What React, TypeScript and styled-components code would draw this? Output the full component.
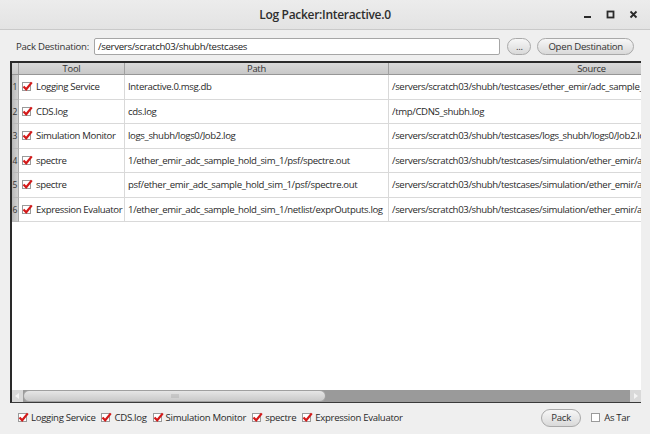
import React from "react";
import styled, { createGlobalStyle } from "styled-components";

const Global = createGlobalStyle`
  html, body { margin: 0; padding: 0; background: #efefef; }
  body { font-family: "Open Sans", "Noto Sans", sans-serif; color: #222; }
  * { box-sizing: border-box; }
`;

const Window = styled.div`
  width: 650px;
  height: 434px;
  display: flex;
  flex-direction: column;
  background: #efefef;
  overflow: hidden;
`;

const TitleBar = styled.div`
  height: 30px;
  flex: none;
  display: grid;
  grid-template-columns: 1fr auto 1fr;
  align-items: center;
  background: linear-gradient(#ececec, #e3e3e3);
  border-bottom: 1px solid #c9c9c9;
`;

const Title = styled.div`
  grid-column: 2;
  font-size: 12px;
  font-weight: 600;
  color: #2e2e2e;
  letter-spacing: -0.3px;
`;

const Controls = styled.div`
  grid-column: 3;
  justify-self: end;
  display: flex;
  gap: 14px;
  padding-right: 12px;
  align-items: center;
`;

const DestRow = styled.div`
  flex: none;
  display: flex;
  align-items: center;
  height: 31px;
  padding: 1px 16px 0 16px;
`;

const Label = styled.span`
  font-size: 9.6px;
  letter-spacing: -0.25px;
  color: #333;
  white-space: nowrap;
`;

const PathInput = styled.div`
  margin-left: 5px;
  width: 408px;
  height: 17px;
  background: #fff;
  border: 1px solid #a6a6a6;
  border-radius: 2px;
  font-size: 9.6px;
  letter-spacing: -0.3px;
  padding: 0 3px;
  line-height: 15px;
  color: #222;
`;

const PillButton = styled.div<{ $w: number; $ml: number }>`
  margin-left: ${(p) => p.$ml}px;
  width: ${(p) => p.$w}px;
  height: 17px;
  border: 1px solid #a9a9a9;
  border-radius: 9px;
  background: linear-gradient(#f7f7f7, #d9d9d9);
  font-size: 9.6px;
  letter-spacing: -0.25px;
  display: flex;
  align-items: center;
  justify-content: center;
  color: #333;
  white-space: nowrap;
`;

const Frame = styled.div`
  flex: none;
  height: 342px;
  margin: 0 9px 0 10px;
  border-left: 2px solid #2a2a2a;
  border-top: 2px solid #2a2a2a;
  border-bottom: 1px solid #3a3a3a;
  display: flex;
  flex-direction: column;
  background: #fff;
  overflow: hidden;
`;

const Grid = styled.div`
  flex: 1;
  display: grid;
  grid-template-columns: 7px 106px 264px 406px;
  grid-auto-rows: 24.5px;
  grid-template-rows: 12px;
  align-content: start;
  overflow: hidden;
`;

const HeadCell = styled.div`
  background: linear-gradient(#d9d9d9, #c8c8c8);
  border-right: 1px solid #a0a0a0;
  border-bottom: 1px solid #969696;
  font-size: 9.4px;
  letter-spacing: -0.25px;
  color: #333;
  display: flex;
  align-items: center;
  justify-content: center;
  line-height: 1;
`;

const NumCell = styled.div`
  background: linear-gradient(90deg, #b9b9b9, #d2d2d2);
  border-bottom: 1px solid #b8b8b8;
  border-right: 1px solid #aaa;
  font-size: 8.5px;
  color: #333;
  display: flex;
  align-items: center;
  padding-left: 0.5px;
`;

const Cell = styled.div`
  border-right: 1px solid #d9d9d9;
  border-bottom: 1px solid #d9d9d9;
  font-size: 9.6px;
  letter-spacing: -0.36px;
  color: #2a2a2a;
  display: flex;
  align-items: center;
  padding-left: 3px;
  white-space: nowrap;
  overflow: hidden;
  gap: 5px;
`;

const HScroll = styled.div`
  flex: none;
  height: 12px;
  display: flex;
  align-items: stretch;
  background: #9a9a9a;
`;

const Arrow = styled.div`
  width: 11px;
  background: #d9d9d9;
  display: flex;
  align-items: center;
  justify-content: center;
`;

const Thumb = styled.div`
  width: 303px;
  background: linear-gradient(#e6e6e6, #c9c9c9);
  border: 1px solid #a0a0a0;
  border-radius: 6px;
  display: flex;
  align-items: center;
  justify-content: center;
`;

const Trough = styled.div`
  flex: 1;
`;

const BottomBar = styled.div`
  flex: 1;
  display: flex;
  align-items: center;
  padding: 0 14px 2px 18px;
`;

const Check = styled.label`
  display: flex;
  align-items: center;
  gap: 4px;
  margin-right: 6px;
  font-size: 9.6px;
  letter-spacing: -0.3px;
  color: #2a2a2a;
  white-space: nowrap;
`;

const Box = styled.span`
  width: 9px;
  height: 9px;
  flex: none;
  background: #fff;
  border: 1px solid #9a9a9a;
  position: relative;
  display: inline-block;
`;

const Spacer = styled.div`
  flex: 1;
`;

const PackButton = styled(PillButton)`
  height: 18px;
  margin-right: 10px;
`;

const CheckMark = () => (
  <svg
    width="11"
    height="10"
    viewBox="0 0 11 10"
    style={{ position: "absolute", left: -1, top: -2 }}
  >
    <path d="M1.5 5.5 L4.2 8.3 L9.8 1.4" stroke="#d41a1a" strokeWidth="2.2" fill="none" />
  </svg>
);

const CheckBox = ({ checked }: { checked: boolean }) => (
  <Box>{checked && <CheckMark />}</Box>
);

const rows = [
  ["Logging Service", "Interactive.0.msg.db", "/servers/scratch03/shubh/testcases/ether_emir/adc_sample_hold_sim_1/Interactive.0.msg.db"],
  ["CDS.log", "cds.log", "/tmp/CDNS_shubh.log"],
  ["Simulation Monitor", "logs_shubh/logs0/Job2.log", "/servers/scratch03/shubh/testcases/logs_shubh/logs0/Job2.log"],
  ["spectre", "1/ether_emir_adc_sample_hold_sim_1/psf/spectre.out", "/servers/scratch03/shubh/testcases/simulation/ether_emir/adc_sample_hold"],
  ["spectre", "psf/ether_emir_adc_sample_hold_sim_1/psf/spectre.out", "/servers/scratch03/shubh/testcases/simulation/ether_emir/adc_sample_hold"],
  ["Expression Evaluator", "1/ether_emir_adc_sample_hold_sim_1/netlist/exprOutputs.log", "/servers/scratch03/shubh/testcases/simulation/ether_emir/adc_sample_hold"],
];

const filters = ["Logging Service", "CDS.log", "Simulation Monitor", "spectre", "Expression Evaluator"];

export default function App() {
  return (
    <Window>
      <Global />
      <TitleBar>
        <Title>Log Packer:Interactive.0</Title>
        <Controls>
          <svg width="9" height="9" viewBox="0 0 9 9">
            <rect x="1" y="6" width="7" height="2" fill="#2a2a2a" />
          </svg>
          <svg width="9" height="9" viewBox="0 0 9 9">
            <rect x="1.5" y="1.5" width="6" height="6" fill="none" stroke="#2a2a2a" strokeWidth="1.8" />
          </svg>
          <svg width="9" height="9" viewBox="0 0 9 9">
            <path d="M1.5 1.5 L7.5 7.5 M7.5 1.5 L1.5 7.5" stroke="#2a2a2a" strokeWidth="1.8" />
          </svg>
        </Controls>
      </TitleBar>
      <DestRow>
        <Label>Pack Destination:</Label>
        <PathInput>/servers/scratch03/shubh/testcases</PathInput>
        <PillButton $w={24} $ml={7}>...</PillButton>
        <PillButton $w={97} $ml={6}>Open Destination</PillButton>
      </DestRow>
      <Frame>
        <Grid>
          <HeadCell />
          <HeadCell>Tool</HeadCell>
          <HeadCell>Path</HeadCell>
          <HeadCell>Source</HeadCell>
          {rows.map((r, i) => (
            <React.Fragment key={i}>
              <NumCell>{i + 1}</NumCell>
              <Cell>
                <CheckBox checked />
                {r[0]}
              </Cell>
              <Cell>{r[1]}</Cell>
              <Cell>{r[2]}</Cell>
            </React.Fragment>
          ))}
        </Grid>
        <HScroll>
          <Arrow>
            <svg width="5" height="6" viewBox="0 0 5 6"><path d="M4 0 L0 3 L4 6 Z" fill="#f4f4f4" /></svg>
          </Arrow>
          <Thumb>
            <svg width="8" height="4" viewBox="0 0 8 4">
              <path d="M1 0V4M3 0V4M5 0V4M7 0V4" stroke="#aaa" strokeWidth="0.8" />
            </svg>
          </Thumb>
          <Trough />
          <Arrow>
            <svg width="5" height="6" viewBox="0 0 5 6"><path d="M1 0 L5 3 L1 6 Z" fill="#f4f4f4" /></svg>
          </Arrow>
        </HScroll>
      </Frame>
      <BottomBar>
        {filters.map((f) => (
          <Check key={f}>
            <CheckBox checked />
            {f}
          </Check>
        ))}
        <Spacer />
        <PackButton $w={40} $ml={0}>Pack</PackButton>
        <Check>
          <CheckBox checked={false} />
          As Tar
        </Check>
      </BottomBar>
    </Window>
  );
}
